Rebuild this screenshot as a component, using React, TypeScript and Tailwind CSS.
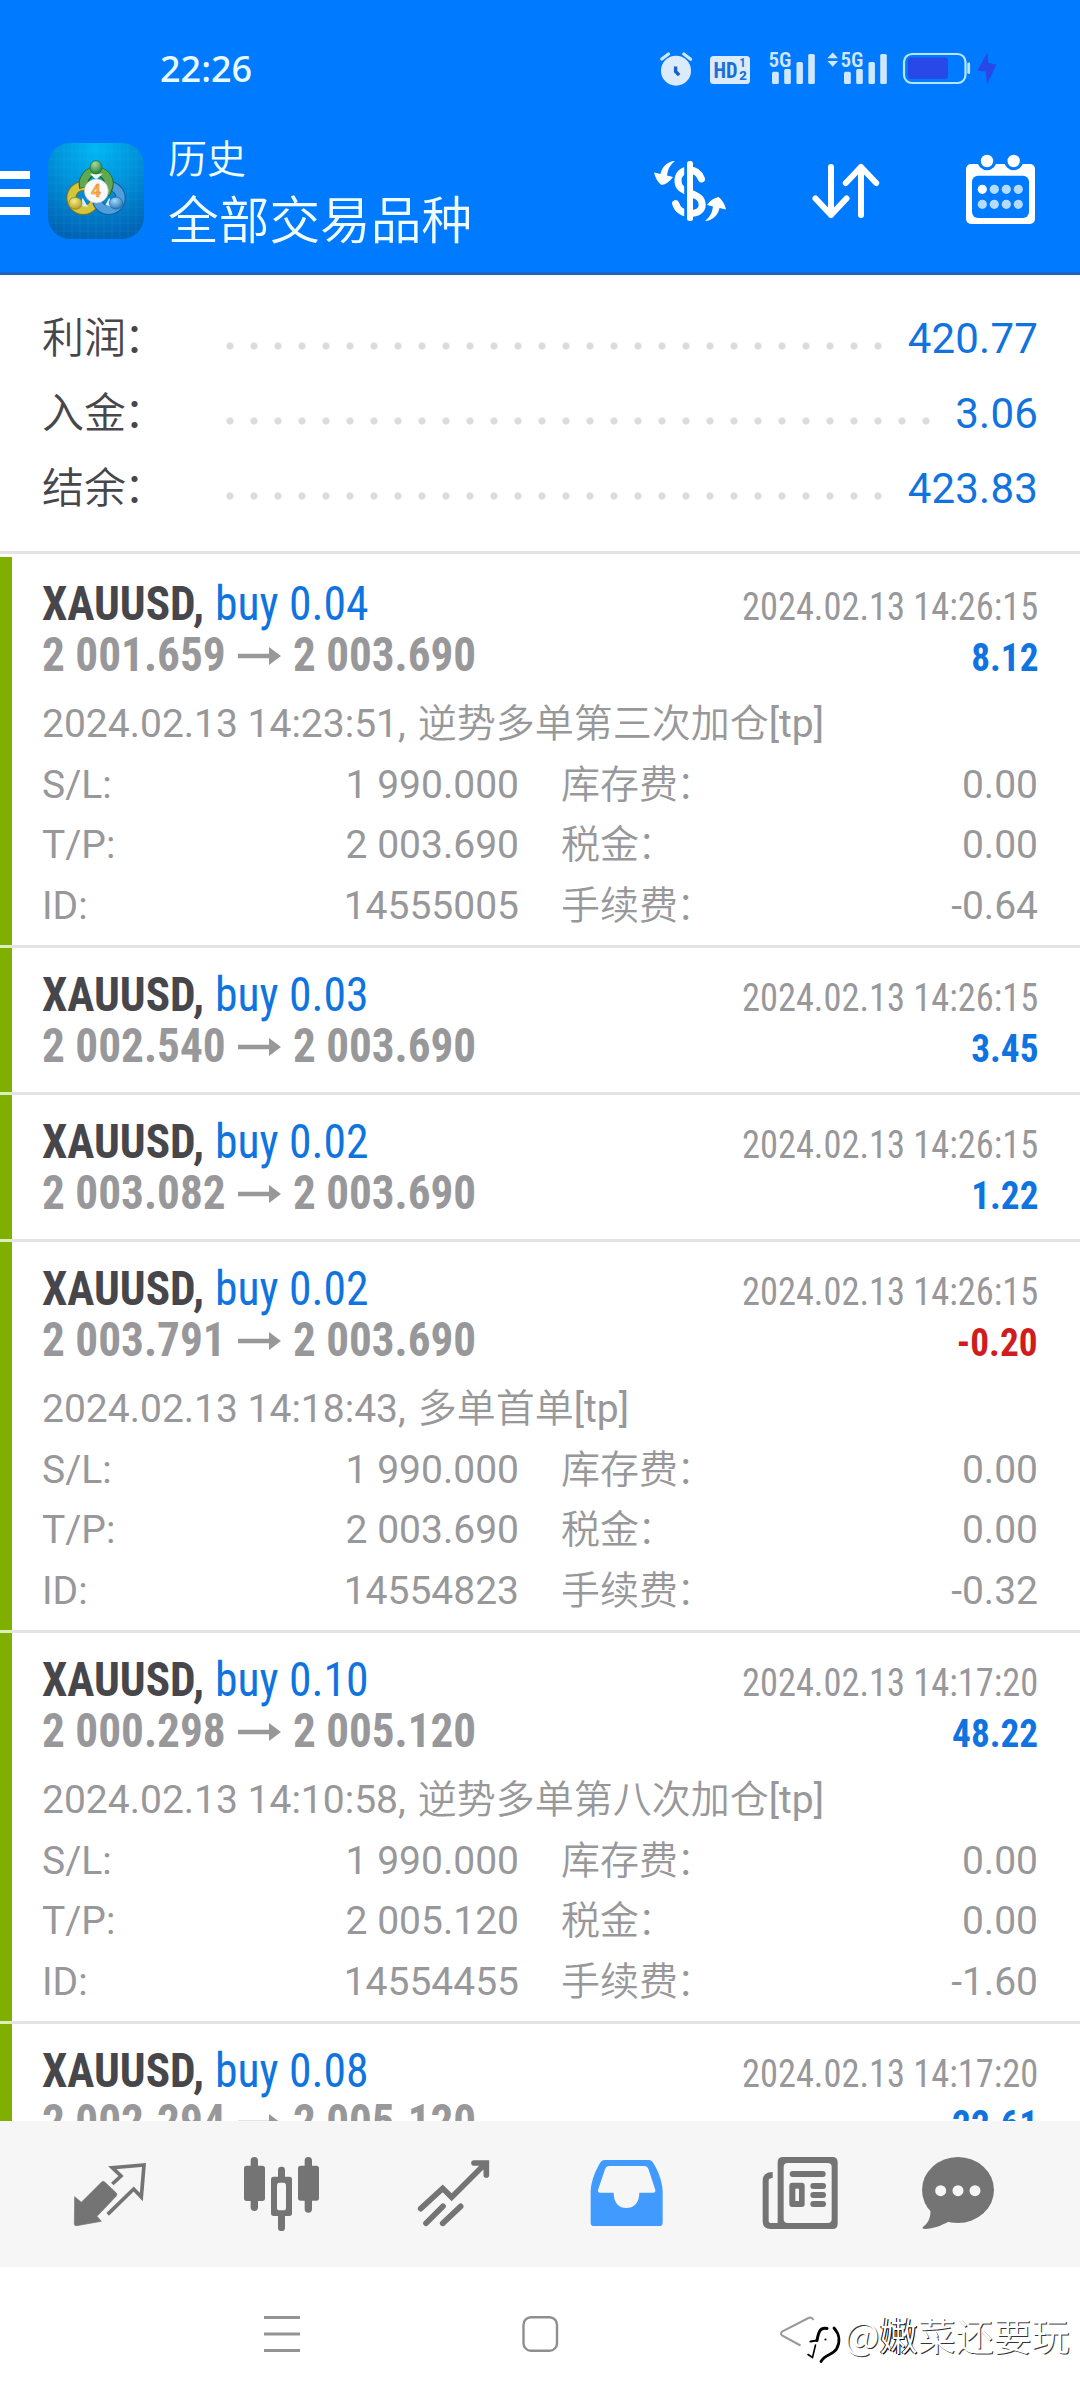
import type { ReactNode } from 'react';

type Details = {
  opened: string;
  comment: string;
  sl: string;
  tp: string;
  id: string;
  fee: string;
};

type Deal = {
  volume: string;
  from: string;
  to: string;
  time: string;
  profit: string;
  details?: Details;
};

const deals: Deal[] = [
  {
    volume: '0.04', from: '2 001.659', to: '2 003.690', time: '2024.02.13 14:26:15', profit: '8.12',
    details: { opened: '2024.02.13 14:23:51,', comment: '逆势多单第三次加仓', sl: '1 990.000', tp: '2 003.690', id: '14555005', fee: '-0.64' },
  },
  { volume: '0.03', from: '2 002.540', to: '2 003.690', time: '2024.02.13 14:26:15', profit: '3.45' },
  { volume: '0.02', from: '2 003.082', to: '2 003.690', time: '2024.02.13 14:26:15', profit: '1.22' },
  {
    volume: '0.02', from: '2 003.791', to: '2 003.690', time: '2024.02.13 14:26:15', profit: '-0.20',
    details: { opened: '2024.02.13 14:18:43,', comment: '多单首单', sl: '1 990.000', tp: '2 003.690', id: '14554823', fee: '-0.32' },
  },
  {
    volume: '0.10', from: '2 000.298', to: '2 005.120', time: '2024.02.13 14:17:20', profit: '48.22',
    details: { opened: '2024.02.13 14:10:58,', comment: '逆势多单第八次加仓', sl: '1 990.000', tp: '2 005.120', id: '14554455', fee: '-1.60' },
  },
  { volume: '0.08', from: '2 002.294', to: '2 005.120', time: '2024.02.13 14:17:20', profit: '22.61' },
];

function Signal() {
  return (
    <g fill="#cfe8ff">
      <text x="768.5" y="67.3" fontSize="20.5" fontWeight="600" textLength="23" lengthAdjust="spacingAndGlyphs">5G</text>
      <rect x="772" y="71.7" width="6.8" height="12.3" rx="1.5" />
      <rect x="784.2" y="69" width="6.6" height="15" rx="1.5" />
      <rect x="796.5" y="62" width="6.4" height="22" rx="1.5" />
      <rect x="808.2" y="54" width="6.6" height="30" rx="1.5" />
    </g>
  );
}

function StatusBar() {
  return (
    <div className="flex h-[124px] items-start pt-[50px]">
      <span className="ml-[160px] w-[99px] font-['Noto_Sans'] text-[36px] leading-[37px] font-medium text-[#e8fbff]">22:26</span>
      <svg className="ml-[399px] h-10 w-9" viewBox="658 50 36 40">
        <circle cx="676" cy="70.7" r="15" fill="#dcebfb" />
        <path d="M661.8 59l6.7-5M683.8 54l6.8 5.2" stroke="#cfe8ff" strokeWidth="3.2" strokeLinecap="round" />
        <path d="M675.6 66.5v5l3.6 3.6" fill="none" stroke="#1560cc" strokeWidth="3.4" />
      </svg>
      <svg className="ml-[14px] h-10 w-11 font-['Roboto_Condensed']" viewBox="708 50 44 40">
        <rect x="710" y="56" width="40" height="28" rx="3.5" fill="#dcebfb" />
        <g fill="#1c6fd6">
          <text x="713.5" y="77.8" fontSize="22" fontWeight="700" textLength="24" lengthAdjust="spacingAndGlyphs">HD</text>
          <text x="739.5" y="67" fontSize="12" fontWeight="700">1</text>
          <text x="739" y="80" fontSize="13" fontWeight="700" textLength="8" lengthAdjust="spacingAndGlyphs">2</text>
        </g>
      </svg>
      <svg className="ml-[14px] h-10 w-[52px] overflow-visible font-['Roboto_Condensed']" viewBox="766 50 52 40">
        <Signal />
      </svg>
      <svg className="ml-2 h-10 w-16 overflow-visible font-['Roboto_Condensed']" viewBox="754 50 64 40">
        <path d="M760.7 52.5l5.3 5.7h-10.6zM760.7 66.7l5.3-5.7h-10.6z" fill="#cfe8ff" />
        <Signal />
      </svg>
      <svg className="ml-3 h-10 w-[70px]" viewBox="902 50 70 40">
        <rect x="904" y="54" width="61.5" height="29" rx="8" fill="none" stroke="#b8e6ff" strokeWidth="2.2" />
        <rect x="908" y="57.5" width="40" height="21.5" rx="3.5" fill="#2849e8" />
        <rect x="967.3" y="62.5" width="2.8" height="11.5" rx="1.4" fill="#b8e6ff" />
      </svg>
      <svg className="ml-1 h-10 w-[22px]" viewBox="976 50 22 40">
        <path d="M987.3 52.5L977.5 70.5L985.5 71.5L987.3 84L996.5 64.5L988.3 63z" fill="#2849e8" />
      </svg>
    </div>
  );
}

function Logo() {
  const lines = [168, 192, 216, 240, 264, 288, 312, 336, 360, 384, 408];
  return (
    <svg className="ml-[18px] size-24 rounded-[22px] font-['Roboto']" viewBox="144 26 288 288">
      <defs>
        <radialGradient id="sky" cx="0.5" cy="0.05" r="0.95">
          <stop offset="0" stopColor="#00b8f4" />
          <stop offset="0.5" stopColor="#008fd8" />
          <stop offset="1" stopColor="#0064b4" />
        </radialGradient>
        <radialGradient id="green" cx="0.4" cy="0.25" r="0.8"><stop offset="0" stopColor="#a8dc9c" /><stop offset="1" stopColor="#1f7a34" /></radialGradient>
        <radialGradient id="gold" cx="0.4" cy="0.3" r="0.8"><stop offset="0" stopColor="#f6ee8c" /><stop offset="1" stopColor="#a89418" /></radialGradient>
        <radialGradient id="blue" cx="0.4" cy="0.3" r="0.8"><stop offset="0" stopColor="#a4dcfa" /><stop offset="1" stopColor="#1d6cb4" /></radialGradient>
      </defs>
      <rect x="144" y="26" width="288" height="288" fill="url(#sky)" />
      <g stroke="#58c4f4" strokeOpacity="0.16" strokeWidth="2">
        {lines.map((n) => <path key={n} d={`M${n} 26v288M144 ${n - 118}h288`} />)}
      </g>
      <g fill="none">
        <circle cx="250" cy="191" r="36" stroke="#7a7420" strokeWidth="30" />
        <circle cx="250" cy="191" r="36" stroke="#d3c53c" strokeWidth="24" />
        <circle cx="326" cy="191" r="36" stroke="#175d9c" strokeWidth="30" />
        <circle cx="326" cy="191" r="36" stroke="#4f9fdc" strokeWidth="24" />
        <path d="M252 160A38 38 0 1 1 326 156L316 180" stroke="#24682c" strokeWidth="29" />
        <path d="M252 158A38 38 0 1 1 326 155L317 178" stroke="#5fa950" strokeWidth="23" />
      </g>
      <path d="M270 118L288 136L308 118z" fill="#e6f7ef" />
      <path d="M240 214L248 190L264 218zM316 212L328 190L338 218z" fill="#d8ecf4" />
      <ellipse cx="288" cy="99" rx="18" ry="20" fill="url(#green)" stroke="#1f6a30" strokeWidth="2" />
      <ellipse cx="226" cy="207" rx="20" ry="18" fill="url(#gold)" stroke="#857a1c" strokeWidth="2" />
      <ellipse cx="348" cy="206" rx="20" ry="18" fill="url(#blue)" stroke="#17609c" strokeWidth="2" />
      <circle cx="289" cy="170" r="36" fill="#fafafa" stroke="#b8b8b8" strokeWidth="2" />
      <text x="272" y="189" fontSize="54" fontWeight="700" fill="#f6ad55" stroke="#e08a2c" strokeWidth="1">4</text>
    </svg>
  );
}

function Header() {
  return (
    <header className="h-[275px] shrink-0 border-b-[3px] border-[#1a67bd] bg-[#007aff]">
      <StatusBar />
      <div className="flex items-start pt-[5px]">
        <div className="mt-[42px] flex w-[30px] flex-col gap-[10px]">
          <span className="h-2 bg-white" />
          <span className="h-2 bg-white" />
          <span className="h-2 bg-white" />
        </div>
        <div className="mt-[14px]"><Logo /></div>
        <div className="ml-6 flex w-[478px] flex-col font-['Noto_Sans_CJK_SC'] font-[350] text-[#f0fdff]">
          <span className="mt-[3px] text-[39px] leading-[48px]">历史</span>
          <span className="mt-[5px] text-[50.7px] leading-[64px]">全部交易品种</span>
        </div>
        <svg className="mt-[21px] ml-1 h-20 w-20" viewBox="650 150 80 80">
          <path d="M701.5 179C699 172.5 694 170 689.5 170C682 170 678 174.5 678 181C678 188 683 190 690 193C698 196 702.2 198.5 702.2 205C702.2 210.5 697 213.5 690 213.5C683 213.5 677.5 210 675.6 203.5" fill="none" stroke="#fff" strokeWidth="7" strokeLinecap="round" />
          <path d="M684.2 162h3v58h-3z" fill="#007aff" />
          <rect x="687" y="161" width="6" height="60" rx="2.5" fill="#fff" />
          <g fill="#fff">
            <path d="M675 161C668 161.5 662 166 660.5 174L654 172.5Q656 181 661.5 185Q668 184 673 177L667 175.5C668 169 670 165 675 161Z" />
            <path d="M705 221C712 220.5 718 216 719.5 208L726 209.5Q724 201 718.5 197Q712 198 707 205L713 206.5C712 213 710 217 705 221Z" />
          </g>
        </svg>
        <svg className="mt-[21px] ml-20 h-20 w-[72px]" viewBox="810 150 72 80">
          <path d="M831 167v48M815.5 198.5L831 215L846.5 198.5M861 215v-48M845.8 183L861 167L876.2 183" fill="none" stroke="#fff" strokeWidth="6" strokeLinecap="round" strokeLinejoin="round" />
        </svg>
        <svg className="mt-[21px] ml-20 h-20 w-[76px]" viewBox="962 150 76 80">
          <rect x="966" y="164" width="69" height="60" rx="5" fill="#fff" />
          <rect x="972" y="175.7" width="57" height="42.3" rx="6" fill="#007aff" />
          <circle cx="987" cy="161" r="9.3" fill="#007aff" />
          <circle cx="1013.7" cy="161" r="9.3" fill="#007aff" />
          <circle cx="987" cy="161" r="6.2" fill="#fff" />
          <circle cx="1013.7" cy="161" r="6.2" fill="#fff" />
          {[189.3, 204.3].map((y) =>
            [982.3, 994.3, 1006.3, 1018.3].map((x) => (
              <circle key={`${x}-${y}`} cx={x} cy={y} r="4.6" fill={x < 990 && y < 200 ? '#fff' : '#b5dcff'} />
            )),
          )}
        </svg>
      </div>
    </header>
  );
}

function SummaryRow({ label, value, dots }: { label: string; value: string; dots: string }) {
  return (
    <div className="flex h-[75px] items-center text-[42px] leading-[75px]">
      <span className="w-[176px] font-[350] text-[#47474b]">
        {label}<span className="-ml-[2px]">：</span>
      </span>
      <span className={`${dots} mt-[15px] h-3 bg-[radial-gradient(circle,#dcdcdf_3.2px,transparent_4px)] bg-[length:24px_12px]`} />
      <span className="ml-auto tracking-[0.2px] text-[#1173de]">{value}</span>
    </div>
  );
}

function DetailRow({ label, value, label2, value2 }: { label: string; value: string; label2: string; value2: string }) {
  return (
    <div className="grid h-[60.5px] grid-cols-2 gap-x-[42px] leading-[61px]">
      <div className="flex justify-between"><span>{label}</span><span>{value}</span></div>
      <div className="flex justify-between">
        <span className="font-[350]">{label2}<span className="-ml-[2px] font-light">：</span></span>
        <span>{value2}</span>
      </div>
    </div>
  );
}

function DealCard({ deal }: { deal: Deal }) {
  const { details } = deal;
  const profitColor = deal.profit.startsWith('-') ? 'text-[#d01c1c]' : 'text-[#0f74e0]';
  return (
    <article className="shrink-0">
      <div className={`flex ${details ? 'h-[388px]' : 'h-[144px]'}`}>
        <div className="w-3 shrink-0 bg-[#7fb000]" />
        <div className="flex grow flex-col pt-[21px] pr-[42px] pl-[30px] text-[39px] text-[#98989b]">
          <div className="flex h-[51px] items-baseline font-['Roboto_Condensed'] text-[48px] leading-[51px]">
            <span className="w-[173px] origin-left scale-x-[0.943] font-bold text-[#47474b]">XAUUSD,</span>
            <span className="origin-left scale-x-[0.950] text-[#0f74e0]">buy {deal.volume}</span>
            <span className="ml-auto origin-right scale-x-[0.934] text-[39px] leading-[40px]">{deal.time}</span>
          </div>
          <div className="flex h-[51px] items-baseline font-['Roboto_Condensed'] text-[48px] leading-[51px] font-bold">
            <span className="w-[196px] origin-left scale-x-[0.943]">{deal.from}</span>
            <svg className="mt-[18px] h-[18px] w-11 self-start" viewBox="0 0 44 18">
              <path d="M0 6.7h31V0l12 9l-12 9v-6.7H0z" fill="#98989b" />
            </svg>
            <span className="ml-[11px] origin-left scale-x-[0.940]">{deal.to}</span>
            <span className={`ml-auto origin-right scale-x-[0.955] text-[39px] leading-[40px] ${profitColor}`}>{deal.profit}</span>
          </div>
          {details && (
            <div className="mt-[13.5px]">
              <p className="flex h-[61px] leading-[61px]">
                <span className="mr-3">{details.opened}</span>
                <span className="font-[350]">{details.comment}</span>
                <span>[tp]</span>
              </p>
              <DetailRow label="S/L:" value={details.sl} label2="库存费" value2="0.00" />
              <DetailRow label="T/P:" value={details.tp} label2="税金" value2="0.00" />
              <DetailRow label="ID:" value={details.id} label2="手续费" value2={details.fee} />
            </div>
          )}
        </div>
      </div>
      <div className="flex h-[3px] bg-[#e3e3e5]"><span className="w-3 bg-[#dcefbb]" /></div>
    </article>
  );
}

function Tab({ className, viewBox, children }: { className: string; viewBox: string; children: ReactNode }) {
  return <svg className={`${className} h-[78px]`} viewBox={viewBox}>{children}</svg>;
}

function TabBar() {
  return (
    <nav className="flex h-[146px] shrink-0 items-start bg-[#f6f6f6] pt-[34px] text-[#747474]">
      <Tab className="ml-[72px] w-[76px]" viewBox="36 45 228 234">
        <path d="M44 170L64 187L125 126Q129.5 122 134 126L169 159Q172 163 169 168L111 229L124 244L50 257Q43 258 43 251z" fill="currentColor" stroke="currentColor" strokeWidth="2" strokeLinejoin="round" />
        <path d="M157 132L183 108L157 83L252 75L244 171L221 147L143 223" fill="none" stroke="currentColor" strokeWidth="11" />
      </Tab>
      <Tab className="ml-[94px] w-20" viewBox="546 45 240 234">
        <g fill="currentColor">
          <rect x="552" y="77" width="63" height="106" rx="8" />
          <rect x="572" y="51" width="22" height="162" rx="11" />
          <rect x="654" y="80" width="21" height="60" rx="10" />
          <rect x="654" y="212" width="21" height="61" rx="10" />
          <rect x="633" y="110" width="63" height="118" rx="8" />
          <rect x="714" y="77" width="63" height="105" rx="8" />
          <rect x="734" y="51" width="22" height="167" rx="11" />
        </g>
        <rect x="651" y="128" width="27" height="83" rx="8" fill="#f6f6f6" />
      </Tab>
      <Tab className="ml-[94px] w-[76px]" viewBox="1068 45 228 234">
        <path d="M1082 206L1148 145L1175 172L1277 70M1242 69H1279V105M1098 250L1149 199M1148 250L1202 199" fill="none" stroke="currentColor" strokeWidth="17" strokeLinecap="round" strokeLinejoin="miter" />
      </Tab>
      <Tab className="ml-24 w-[78px]" viewBox="54 45 234 234">
        <path fill="#419bff" fillRule="evenodd" d="M62 248V155C63 120 80 85 92 66Q96 60 104 60H236Q244 60 248 66C262 88 277 120 278 155V248Q278 258 268 258H72Q62 258 62 248ZM84 150L105 88Q109 78 118 78H224Q232 78 235 86L256 150Q257 158 250 158H208C208 190 190 204 169 204C148 204 131 190 131 158H90Q83 158 84 150Z" />
      </Tab>
      <Tab className="ml-[94px] w-20" viewBox="570 45 240 234">
        <path fill="currentColor" fillRule="evenodd" d="M639 51H787Q803 51 803 67V251Q803 267 787 267H639Q623 267 623 251V67Q623 51 639 51ZM653 69Q641 69 641 81V237Q641 249 653 249H773Q785 249 785 237V81Q785 69 773 69Z" />
        <path d="M608 105Q587 105 587 122V243Q587 258 602 258H640" fill="none" stroke="currentColor" strokeWidth="18" />
        <g fill="currentColor">
          <rect x="659" y="93" width="108" height="18" rx="9" />
          <rect x="658" y="128" width="46" height="73" rx="9" />
          <rect x="721" y="129" width="47" height="18" rx="9" />
          <rect x="721" y="156" width="47" height="18" rx="9" />
          <rect x="721" y="183" width="47" height="18" rx="9" />
        </g>
        <rect x="676" y="146" width="11" height="37" fill="#f6f6f6" />
      </Tab>
      <Tab className="ml-20 w-[76px]" viewBox="1050 45 228 234">
        <ellipse cx="1164" cy="150" rx="108" ry="99" fill="currentColor" />
        <path d="M1080 200C1086 235 1072 250 1058 262Q1056 267 1064 267C1092 266 1112 258 1138 244Z" fill="currentColor" />
        <g fill="#f6f6f6">
          <circle cx="1112" cy="152" r="16.5" />
          <circle cx="1164" cy="152" r="16.5" />
          <circle cx="1215" cy="152" r="16.5" />
        </g>
      </Tab>
    </nav>
  );
}

function SystemBar() {
  return (
    <footer className="relative flex h-[133px] shrink-0 items-start bg-white pt-[47px]">
      <svg className="ml-[264px] h-10 w-9" viewBox="0 0 36 40">
        <path d="M0 3.5h36M0 20h36M0 36.5h36" stroke="#949494" strokeWidth="3" />
      </svg>
      <svg className="ml-[220px] h-10 w-10" viewBox="0 0 40 40">
        <rect x="3.5" y="3.2" width="33.5" height="33.5" rx="7.5" fill="none" stroke="#8f8f8f" strokeWidth="2.4" />
      </svg>
      <svg className="ml-[216px] h-10 w-10" viewBox="0 0 40 40">
        <path d="M37.5 6Q35.5 2.5 32.5 4L6 17.7Q4 19.5 6 21.5L24.5 31.5" fill="none" stroke="#999" strokeWidth="2" />
      </svg>
      <div className="absolute top-[46px] left-[806px] flex items-start">
        <svg className="mt-[4px] h-[47px] w-[38px]" viewBox="806 2317 38 47" fill="none" stroke="#000" strokeLinecap="round">
          <path d="M827 2328.5C820 2327 818.5 2332 817 2340.5" strokeWidth="3" />
          <path d="M810.5 2341.5L816.5 2340.5" strokeWidth="2.2" />
          <path d="M815.5 2345L812.5 2357.5L808 2354.5" strokeWidth="1.6" />
          <path d="M834 2328C839.5 2334 840.5 2342 836.5 2349C833 2355 825 2354 821 2361.5" strokeWidth="2.8" />
          <circle cx="825.5" cy="2339.5" r="1.1" fill="#000" stroke="none" />
        </svg>
        <span className="font-['Noto_Sans_CJK_SC'] text-[38px] leading-[42px] font-[350] whitespace-nowrap text-white [text-shadow:1px_1px_0.5px_#333]">
          @<span className="[text-shadow:-1px_0_0_#000,1px_1px_0_#000]">嫩</span>菜还要玩
        </span>
      </div>
    </footer>
  );
}

export default function App() {
  return (
    <div className="flex h-[2400px] w-[1080px] flex-col overflow-hidden bg-white font-['Roboto','Noto_Sans_CJK_SC',sans-serif]">
      <Header />
      <section className="h-[279px] shrink-0 border-b-[3px] border-[#e3e3e5] px-[42px] pt-[26px]">
        <SummaryRow label="利润" value="420.77" dots="w-[672px]" />
        <SummaryRow label="入金" value="3.06" dots="w-[720px]" />
        <SummaryRow label="结余" value="423.83" dots="w-[672px]" />
      </section>
      <main className="flex min-h-0 grow flex-col overflow-hidden pt-[3px]">
        {deals.map((deal) => <DealCard key={deal.from} deal={deal} />)}
      </main>
      <TabBar />
      <SystemBar />
    </div>
  );
}
